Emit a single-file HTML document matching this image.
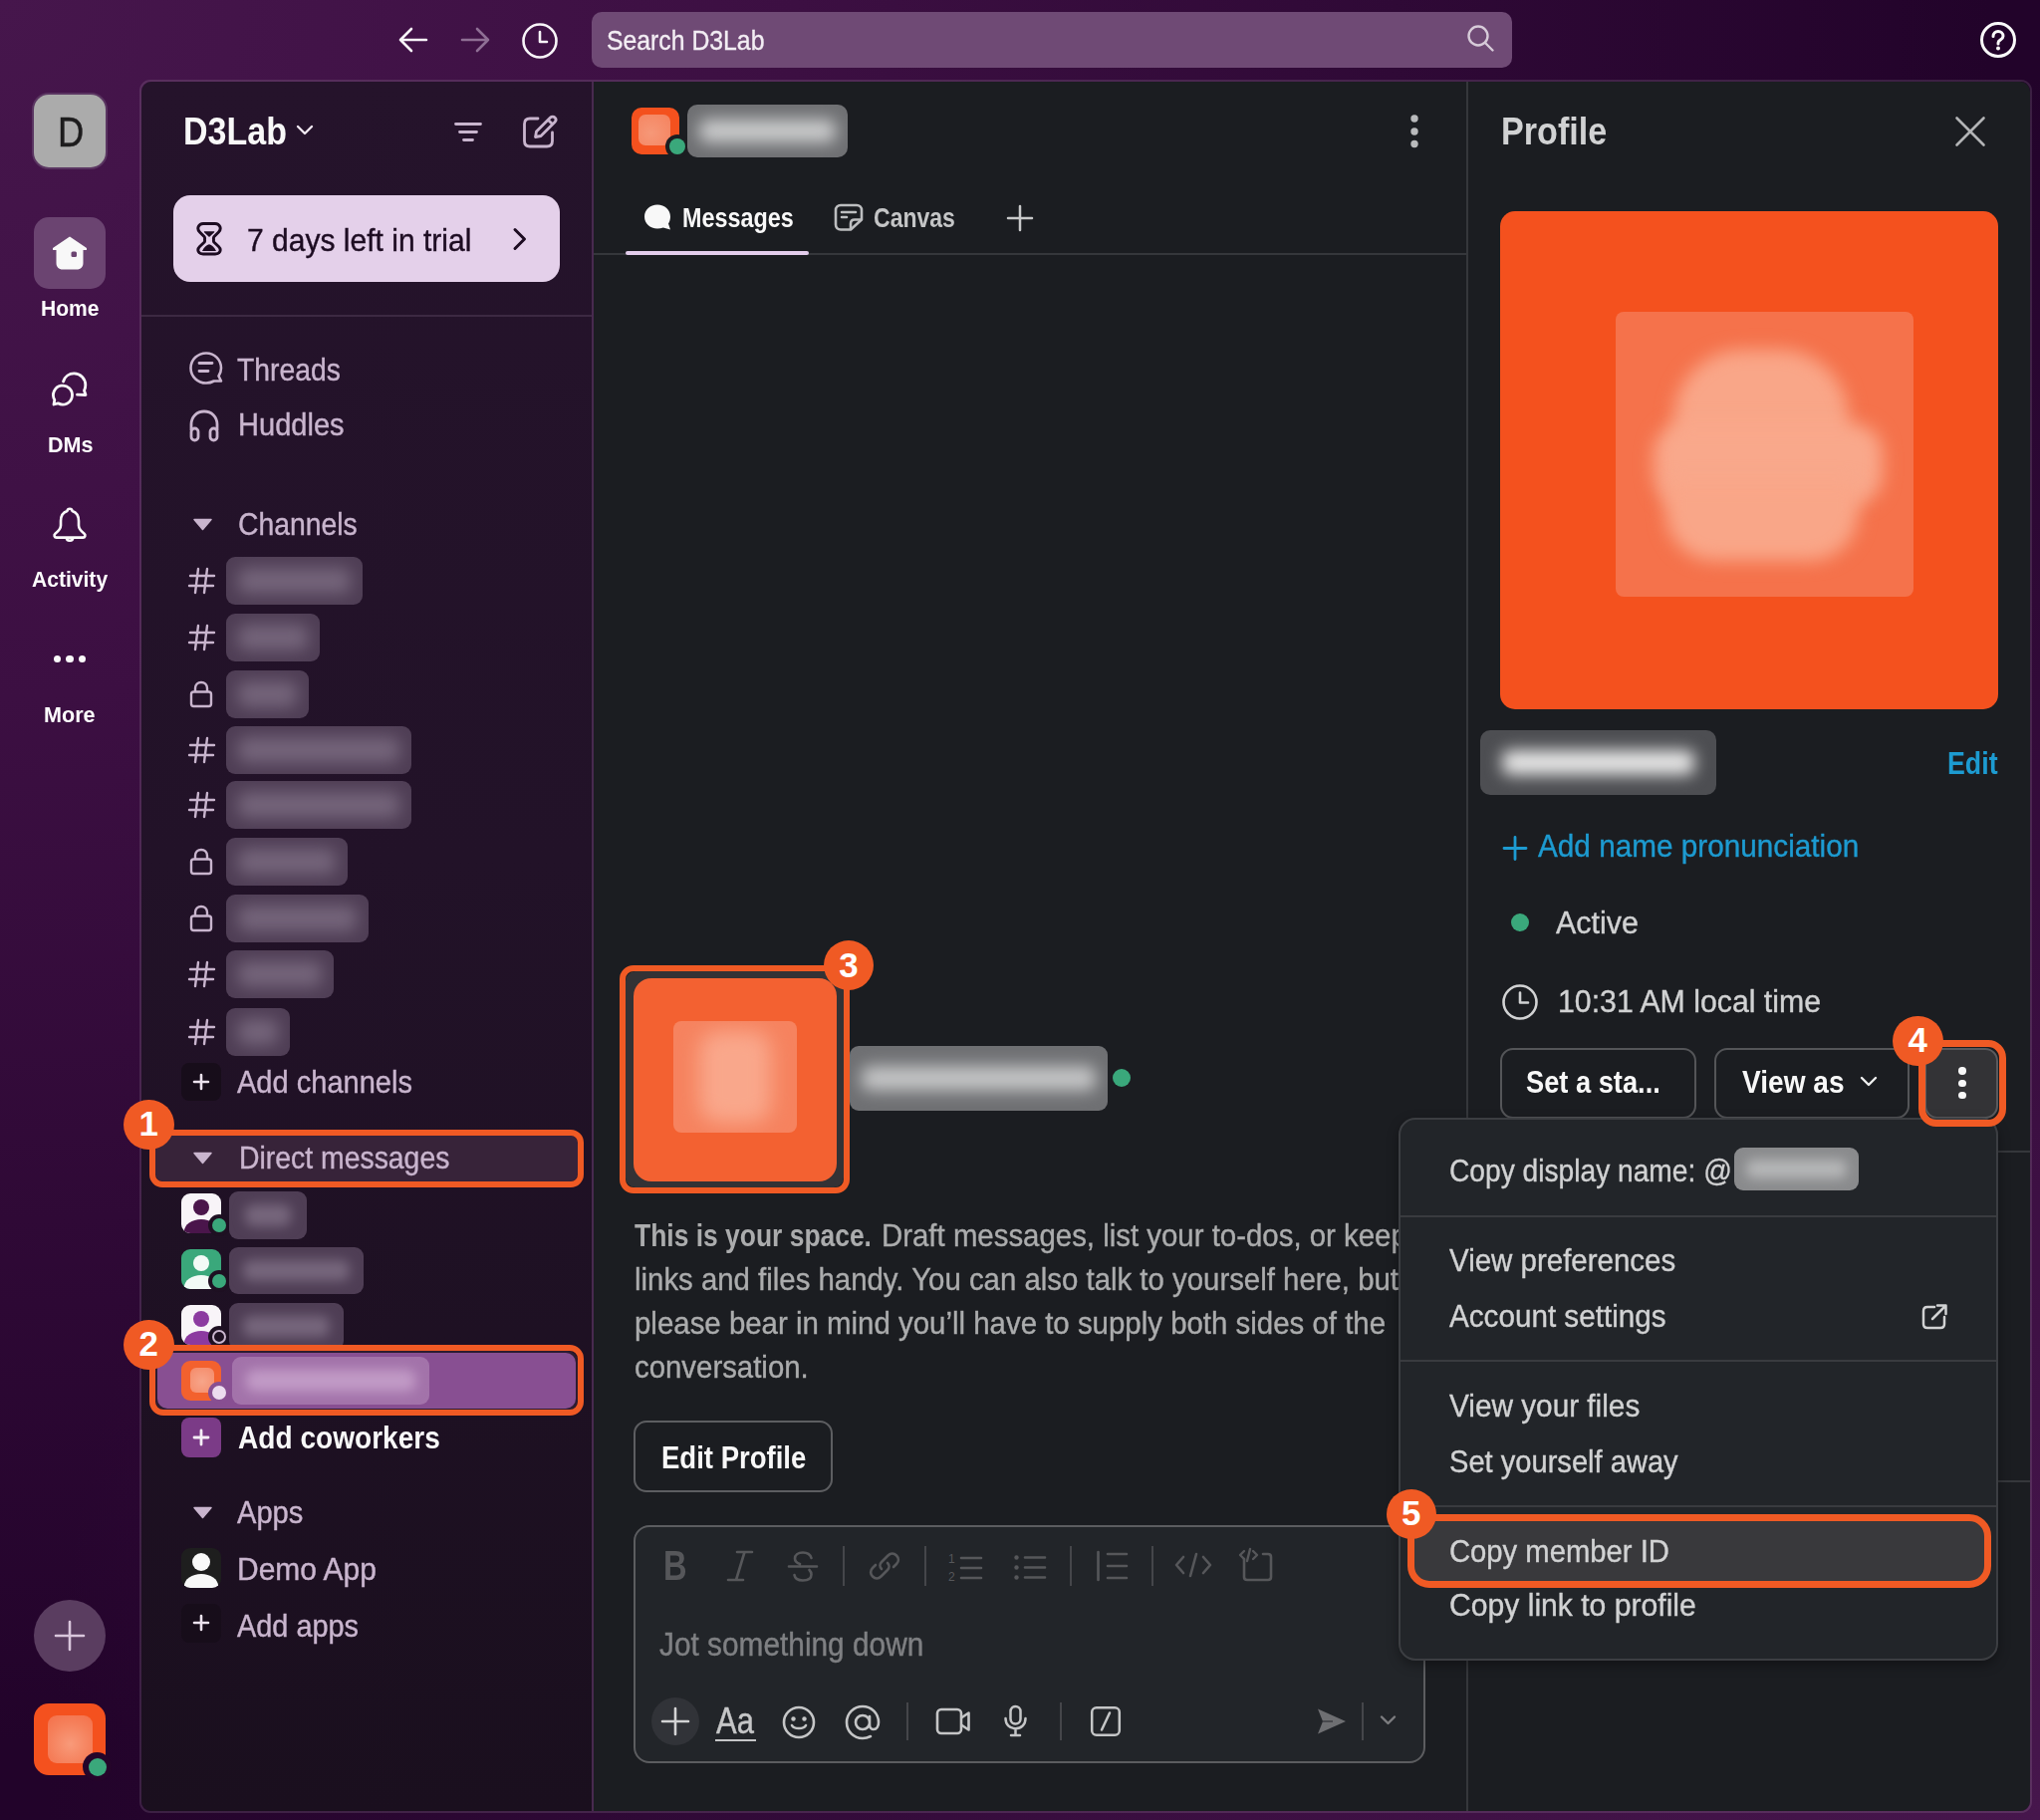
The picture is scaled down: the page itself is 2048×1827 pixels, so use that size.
<!DOCTYPE html><html><head><meta charset="utf-8"><style>html,body{margin:0;padding:0;width:2048px;height:1827px;overflow:hidden;background:#2c0631;}.t{position:absolute;white-space:nowrap;font-family:"Liberation Sans",sans-serif;transform-origin:0 0;}svg{overflow:visible}</style></head><body><div style="position:absolute;left:0;top:0;width:2048px;height:1827px;background:radial-gradient(ellipse 2000px 1750px at 0px 0px,#46164c 0%,#3c0f42 40%,rgba(34,3,42,0) 100%),radial-gradient(ellipse 2000px 1750px at 2048px 1827px,#46164c 0%,#3c0f42 40%,rgba(34,3,42,0) 100%),#22032a"></div>
<svg style="position:absolute;left:398.0px;top:26.0px;" width="32" height="28" viewBox="0 0 32 28" fill="none"><path d="M4 14 H30 M15 3 L4 14 L15 25" stroke="#f8f4f9" stroke-width="2.6" stroke-linecap="round" stroke-linejoin="round"/></svg>
<svg style="position:absolute;left:462.0px;top:26.0px;" width="32" height="28" viewBox="0 0 32 28" fill="none"><path d="M2 14 H28 M17 3 L28 14 L17 25" stroke="#8f6f95" stroke-width="2.6" stroke-linecap="round" stroke-linejoin="round"/></svg>
<svg style="position:absolute;left:522.0px;top:22.0px;" width="40" height="38" viewBox="0 0 40 38" fill="none"><circle cx="20" cy="19" r="16.5" stroke="#f8f4f9" stroke-width="2.6"/><path d="M20 10 V20 H27" stroke="#f8f4f9" stroke-width="2.6" stroke-linecap="round" stroke-linejoin="round"/></svg>
<div style="position:absolute;left:594.0px;top:12.0px;width:924.0px;height:56.0px;background:#6f4a75;border-radius:10px;"></div>
<div class="t" style="left:609.00px;top:26.55px;font-size:28.05px;line-height:28.05px;color:#f3eef4; -webkit-text-stroke:0.34px #f3eef4;transform:scaleX(0.8835);">Search D3Lab</div>
<svg style="position:absolute;left:1472.0px;top:24.0px;" width="30" height="30" viewBox="0 0 30 30" fill="none"><circle cx="12" cy="12" r="9.5" stroke="#d7cbd9" stroke-width="2.4"/><path d="M19 19 L26.5 26.5" stroke="#d7cbd9" stroke-width="2.4" stroke-linecap="round"/></svg>
<svg style="position:absolute;left:1986.0px;top:20.0px;" width="40" height="40" viewBox="0 0 40 40" fill="none"><circle cx="20" cy="20" r="16.5" stroke="#fafafa" stroke-width="3"/><path d="M15 16.5 C15 13.5 17.3 11.5 20 11.5 C22.7 11.5 25 13.5 25 16.2 C25 19 22 19.8 20.5 21.5 C20 22.2 20 23 20 24" stroke="#fafafa" stroke-width="3" stroke-linecap="round"/><circle cx="20" cy="28.6" r="2" fill="#fafafa"/></svg>
<div style="position:absolute;left:34.0px;top:95.0px;width:72.0px;height:73.0px;background:#ababab;border-radius:15px;box-shadow:0 0 0 2px #5a3561;"></div>
<div class="t" style="left:57.70px;top:112.44px;font-size:42.01px;line-height:42.01px;color:#1d1c1d; -webkit-text-stroke:0.50px #1d1c1d;transform:scaleX(0.8630);">D</div>
<div style="position:absolute;left:34.0px;top:218.0px;width:72.0px;height:72.0px;background:#6b4471;border-radius:15px;"></div>
<svg style="position:absolute;left:50.0px;top:234.0px;" width="40" height="40" viewBox="0 0 40 40" fill="none"><path d="M20 3.5 L37 15 L37 17 L33.5 17 L33.5 30 C33.5 34 31 36.5 27 36.5 L13 36.5 C9 36.5 6.5 34 6.5 30 L6.5 17 L3 17 L3 15 Z" fill="#f8f8f8"/><rect x="21.5" y="18.5" width="5.5" height="5.5" rx="1.5" fill="#6b4471"/></svg>
<div class="t" style="left:41.00px;top:299.02px;font-size:21.95px;line-height:21.95px;color:#ffffff; font-weight:700;transform:scaleX(0.9604);">Home</div>
<svg style="position:absolute;left:51.0px;top:371.0px;" width="38" height="38" viewBox="0 0 38 38" fill="none"><path d="M12.5 12 C14 7 18.5 3.9 23.3 3.9 C29.6 3.9 34.8 9 34.8 15.4 C34.8 17.5 34.2 19.5 33.5 21 L35 25.5 L26.5 25.2" stroke="#fafafa" stroke-width="2.8" stroke-linecap="round" stroke-linejoin="round"/><path d="M3.8 30.4 A9.5 9.5 0 1 1 7.25 33.8 L3 35 Z" stroke="#fafafa" stroke-width="2.8" stroke-linejoin="round"/></svg>
<div class="t" style="left:47.70px;top:435.57px;font-size:21.66px;line-height:21.66px;color:#ffffff; font-weight:700;transform:scaleX(0.9957);">DMs</div>
<svg style="position:absolute;left:51.0px;top:507.0px;" width="38" height="38" viewBox="0 0 38 38" fill="none"><path d="M19 3.8 C20.4 3.8 21.3 4.7 21.5 5.9 C25.7 7.2 28 11.2 28 16 L28 20.5 C28 23.8 30.5 26.3 33.6 28.8 C35.2 30.2 34.4 32.6 32.3 32.6 L5.7 32.6 C3.6 32.6 2.8 30.2 4.4 28.8 C7.5 26.3 10 23.8 10 20.5 L10 16 C10 11.2 12.3 7.2 16.5 5.9 C16.7 4.7 17.6 3.8 19 3.8 Z" stroke="#fafafa" stroke-width="2.6" stroke-linejoin="round"/><path d="M15.8 32.6 C15.8 34.6 17.2 35.8 19 35.8 C20.8 35.8 22.2 34.6 22.2 32.6" stroke="#fafafa" stroke-width="2.6"/></svg>
<div class="t" style="left:31.90px;top:570.80px;font-size:22.09px;line-height:22.09px;color:#ffffff; font-weight:700;transform:scaleX(0.9541);">Activity</div>
<div style="position:absolute;left:53.6px;top:658.2px;width:7.2px;height:7.2px;background:#fafafa;border-radius:50%;"></div>
<div style="position:absolute;left:66.4px;top:658.2px;width:7.2px;height:7.2px;background:#fafafa;border-radius:50%;"></div>
<div style="position:absolute;left:79.2px;top:658.2px;width:7.2px;height:7.2px;background:#fafafa;border-radius:50%;"></div>
<div class="t" style="left:44.00px;top:706.93px;font-size:22.53px;line-height:22.53px;color:#ffffff; font-weight:700;transform:scaleX(0.9583);">More</div>
<div style="position:absolute;left:34.0px;top:1606.0px;width:72.0px;height:72.0px;background:#5a3d60;border-radius:50%;"></div>
<svg style="position:absolute;left:50.0px;top:1622.0px;" width="40" height="40" viewBox="0 0 40 40" fill="none"><path d="M20 6 V34 M6 20 H34" stroke="#d9c6dc" stroke-width="2.6" stroke-linecap="round"/></svg>
<div style="position:absolute;left:34.0px;top:1710.0px;width:72.0px;height:72.0px;background:#f4511e;border-radius:15px;"></div>
<div style="position:absolute;left:48px;top:1722px;width:45px;height:48px;border-radius:9px;background:radial-gradient(circle at 50% 60%,#f89a7a 0%,#f57f5a 60%,#f4704a 100%);"></div>
<div style="position:absolute;left:83.0px;top:1759.0px;width:29.0px;height:29.0px;background:#25052a;border-radius:50%;"></div>
<div style="position:absolute;left:88.5px;top:1764.5px;width:18.0px;height:18.0px;background:#3aa87b;border-radius:50%;"></div>
<div style="position:absolute;left:140px;top:80px;width:1900px;height:1740px;border-radius:11px;border:2px solid rgba(255,255,255,0.115);box-sizing:border-box;"></div>
<div style="position:absolute;left:142px;top:82px;width:452px;height:1736px;border-radius:10px 0 0 10px;background:linear-gradient(180deg,#25132b 0%,#221228 45%,#1a0f1e 100%);"></div>
<div class="t" style="left:183.70px;top:113.59px;font-size:37.94px;line-height:37.94px;color:#f8f8f8; font-weight:700;transform:scaleX(0.8965);">D3Lab</div>
<svg style="position:absolute;left:296.0px;top:124.0px;" width="20" height="14" viewBox="0 0 20 14" fill="none"><path d="M3 3 L10 10 L17 3" stroke="#f0e8f1" stroke-width="2.4" stroke-linecap="round" stroke-linejoin="round"/></svg>
<svg style="position:absolute;left:454.0px;top:121.0px;" width="32" height="24" viewBox="0 0 32 24" fill="none"><path d="M3.5 3.5 H28.5 M7.5 11.5 H24.5 M11.5 19.5 H20.5" stroke="#c9b5ce" stroke-width="2.8" stroke-linecap="round"/></svg>
<svg style="position:absolute;left:522.0px;top:113.0px;" width="40" height="38" viewBox="0 0 40 38" fill="none"><path d="M18 6 H10 C6.5 6 4.5 8 4.5 11.5 L4.5 28.5 C4.5 32 6.5 34 10 34 L27 34 C30.5 34 32.5 32 32.5 28.5 L32.5 20" stroke="#c9b5ce" stroke-width="2.8" stroke-linecap="round"/><path d="M15.5 24.5 L16.5 19 L30.5 5 C31.8 3.7 33.8 3.7 35 5 C36.3 6.3 36.3 8.2 35 9.5 L21 23.5 Z M28.2 7.3 L32.7 11.8" stroke="#c9b5ce" stroke-width="2.8" stroke-linejoin="round"/></svg>
<div style="position:absolute;left:174.0px;top:196.0px;width:387.5px;height:87.0px;background:#e4d0ea;border-radius:17px;"></div>
<svg style="position:absolute;left:195.0px;top:221.0px;" width="30" height="38" viewBox="0 0 30 38" fill="none"><path d="M9 3.5 H21 C25.5 3.5 28 8.5 24.5 12 L20 16.5 C19 17.5 19.5 18.5 19.5 19.4 C19.5 20.3 19 21.3 20 22.3 L24.5 26.5 C28 30 25.5 34 21 34 H9 C4.5 34 2 30 5.5 26.5 L10 22.3 C11 21.3 10.5 20.3 10.5 19.4 C10.5 18.5 11 17.5 10 16.5 L5.5 12 C2 8.5 4.5 3.5 9 3.5 Z" stroke="#1d0c22" stroke-width="2.9" stroke-linejoin="round"/><path d="M10.5 11.3 H19.8 C20.3 11.3 20.5 11.8 20.1 12.2 L15.6 16.6 C15.3 16.9 14.8 16.9 14.5 16.6 L10 12.2 C9.6 11.8 9.9 11.3 10.5 11.3 Z" fill="#1d0c22"/><path d="M8 31 C9.5 27.5 12.5 25 15 24.3 C17.5 25 20.5 27.5 22 31 Z" fill="#1d0c22"/></svg>
<div class="t" style="left:247.50px;top:224.93px;font-size:31.98px;line-height:31.98px;color:#1d0c22; -webkit-text-stroke:0.38px #1d0c22;transform:scaleX(0.9396);">7 days left in trial</div>
<svg style="position:absolute;left:512.0px;top:227.0px;" width="20" height="26" viewBox="0 0 20 26" fill="none"><path d="M5 3.5 L14.5 13 L5 22.5" stroke="#1d0c22" stroke-width="3" stroke-linecap="round" stroke-linejoin="round"/></svg>
<div style="position:absolute;left:142.0px;top:316.0px;width:452.0px;height:2.0px;background:#3c2942;"></div>
<svg style="position:absolute;left:188.0px;top:351.0px;" width="38" height="38" viewBox="0 0 38 38" fill="none"><path d="M34 31.5 L31.5 26.5 C33 24 34 21.5 34 18.5 C34 10 27.5 3.5 19 3.5 C10.5 3.5 3.5 10 3.5 18.5 C3.5 27 10.5 33.5 19 33.5 C22 33.5 24.5 32.8 26.8 31.5 Z" stroke="#c9b5ce" stroke-width="2.6" stroke-linejoin="round"/><path d="M12 13.5 H25 M12 21.5 H21" stroke="#c9b5ce" stroke-width="2.8" stroke-linecap="round"/></svg>
<div class="t" style="left:238.00px;top:355.01px;font-size:32.12px;line-height:32.12px;color:#c9b5ce; -webkit-text-stroke:0.39px #c9b5ce;transform:scaleX(0.8822);">Threads</div>
<svg style="position:absolute;left:188.0px;top:410.0px;" width="34" height="34" viewBox="0 0 34 34" fill="none"><path d="M4 22 V16 C4 8.5 9.5 3 17 3 C24.5 3 30 8.5 30 16 V22" stroke="#c9b5ce" stroke-width="2.8"/><rect x="4" y="20" width="7" height="12" rx="3.5" stroke="#c9b5ce" stroke-width="2.8"/><rect x="23" y="20" width="7" height="12" rx="3.5" stroke="#c9b5ce" stroke-width="2.8"/></svg>
<div class="t" style="left:239.00px;top:411.48px;font-size:31.69px;line-height:31.69px;color:#c9b5ce; -webkit-text-stroke:0.38px #c9b5ce;transform:scaleX(0.9167);">Huddles</div>
<svg style="position:absolute;left:192.0px;top:518.0px;" width="24" height="16" viewBox="0 0 24 16" fill="none"><path d="M3 3.5 H20 L11.5 13.5 Z" fill="#c9b5ce" stroke="#c9b5ce" stroke-width="1.5" stroke-linejoin="round"/></svg>
<div class="t" style="left:238.80px;top:511.25px;font-size:31.83px;line-height:31.83px;color:#c9b5ce; -webkit-text-stroke:0.38px #c9b5ce;transform:scaleX(0.8893);">Channels</div>
<svg style="position:absolute;left:188.0px;top:568.9px;" width="30" height="28" viewBox="0 0 30 28" fill="none"><path d="M11 2 L8 26 M20 2 L17 26 M3 9 H27 M2 19 H26" stroke="#c9b5ce" stroke-width="2.4" stroke-linecap="round"/></svg>
<div style="position:absolute;left:227.0px;top:558.9px;width:137.0px;height:48.0px;background:#4f3e55;border-radius:9px;overflow:hidden;"><div style="position:absolute;left:12px;right:12px;top:11px;bottom:11px;background:#74647a;filter:blur(8px);border-radius:8px"></div></div>
<svg style="position:absolute;left:188.0px;top:626.0px;" width="30" height="28" viewBox="0 0 30 28" fill="none"><path d="M11 2 L8 26 M20 2 L17 26 M3 9 H27 M2 19 H26" stroke="#c9b5ce" stroke-width="2.4" stroke-linecap="round"/></svg>
<div style="position:absolute;left:227.0px;top:616.0px;width:94.0px;height:48.0px;background:#4f3e55;border-radius:9px;overflow:hidden;"><div style="position:absolute;left:12px;right:12px;top:11px;bottom:11px;background:#74647a;filter:blur(8px);border-radius:8px"></div></div>
<svg style="position:absolute;left:189.0px;top:682.0px;" width="26" height="30" viewBox="0 0 26 30" fill="none"><path d="M7 12.5 V9 C7 5.5 9.5 3 13 3 C16.5 3 19 5.5 19 9 V12.5" stroke="#c9b5ce" stroke-width="2.4"/><rect x="3" y="12.5" width="20" height="14.5" rx="2.5" stroke="#c9b5ce" stroke-width="2.4"/></svg>
<div style="position:absolute;left:227.0px;top:673.0px;width:83.0px;height:48.0px;background:#4f3e55;border-radius:9px;overflow:hidden;"><div style="position:absolute;left:12px;right:12px;top:11px;bottom:11px;background:#74647a;filter:blur(8px);border-radius:8px"></div></div>
<svg style="position:absolute;left:188.0px;top:738.5px;" width="30" height="28" viewBox="0 0 30 28" fill="none"><path d="M11 2 L8 26 M20 2 L17 26 M3 9 H27 M2 19 H26" stroke="#c9b5ce" stroke-width="2.4" stroke-linecap="round"/></svg>
<div style="position:absolute;left:227.0px;top:728.5px;width:185.6px;height:48.0px;background:#4f3e55;border-radius:9px;overflow:hidden;"><div style="position:absolute;left:12px;right:12px;top:11px;bottom:11px;background:#74647a;filter:blur(8px);border-radius:8px"></div></div>
<svg style="position:absolute;left:188.0px;top:794.0px;" width="30" height="28" viewBox="0 0 30 28" fill="none"><path d="M11 2 L8 26 M20 2 L17 26 M3 9 H27 M2 19 H26" stroke="#c9b5ce" stroke-width="2.4" stroke-linecap="round"/></svg>
<div style="position:absolute;left:227.0px;top:784.0px;width:185.6px;height:48.0px;background:#4f3e55;border-radius:9px;overflow:hidden;"><div style="position:absolute;left:12px;right:12px;top:11px;bottom:11px;background:#74647a;filter:blur(8px);border-radius:8px"></div></div>
<svg style="position:absolute;left:189.0px;top:850.0px;" width="26" height="30" viewBox="0 0 26 30" fill="none"><path d="M7 12.5 V9 C7 5.5 9.5 3 13 3 C16.5 3 19 5.5 19 9 V12.5" stroke="#c9b5ce" stroke-width="2.4"/><rect x="3" y="12.5" width="20" height="14.5" rx="2.5" stroke="#c9b5ce" stroke-width="2.4"/></svg>
<div style="position:absolute;left:227.0px;top:841.0px;width:122.0px;height:48.0px;background:#4f3e55;border-radius:9px;overflow:hidden;"><div style="position:absolute;left:12px;right:12px;top:11px;bottom:11px;background:#74647a;filter:blur(8px);border-radius:8px"></div></div>
<svg style="position:absolute;left:189.0px;top:907.0px;" width="26" height="30" viewBox="0 0 26 30" fill="none"><path d="M7 12.5 V9 C7 5.5 9.5 3 13 3 C16.5 3 19 5.5 19 9 V12.5" stroke="#c9b5ce" stroke-width="2.4"/><rect x="3" y="12.5" width="20" height="14.5" rx="2.5" stroke="#c9b5ce" stroke-width="2.4"/></svg>
<div style="position:absolute;left:227.0px;top:898.0px;width:142.7px;height:48.0px;background:#4f3e55;border-radius:9px;overflow:hidden;"><div style="position:absolute;left:12px;right:12px;top:11px;bottom:11px;background:#74647a;filter:blur(8px);border-radius:8px"></div></div>
<svg style="position:absolute;left:188.0px;top:964.0px;" width="30" height="28" viewBox="0 0 30 28" fill="none"><path d="M11 2 L8 26 M20 2 L17 26 M3 9 H27 M2 19 H26" stroke="#c9b5ce" stroke-width="2.4" stroke-linecap="round"/></svg>
<div style="position:absolute;left:227.0px;top:954.0px;width:107.7px;height:48.0px;background:#4f3e55;border-radius:9px;overflow:hidden;"><div style="position:absolute;left:12px;right:12px;top:11px;bottom:11px;background:#74647a;filter:blur(8px);border-radius:8px"></div></div>
<svg style="position:absolute;left:188.0px;top:1021.5px;" width="30" height="28" viewBox="0 0 30 28" fill="none"><path d="M11 2 L8 26 M20 2 L17 26 M3 9 H27 M2 19 H26" stroke="#c9b5ce" stroke-width="2.4" stroke-linecap="round"/></svg>
<div style="position:absolute;left:227.0px;top:1011.5px;width:63.6px;height:48.0px;background:#4f3e55;border-radius:9px;overflow:hidden;"><div style="position:absolute;left:12px;right:12px;top:11px;bottom:11px;background:#74647a;filter:blur(8px);border-radius:8px"></div></div>
<div style="position:absolute;left:182.0px;top:1066.5px;width:40.0px;height:38.5px;background:#170d1a;border-radius:8px;"></div>
<svg style="position:absolute;left:190.0px;top:1074.0px;" width="24" height="24" viewBox="0 0 24 24" fill="none"><path d="M12 5 V19 M5 12 H19" stroke="#ece2ee" stroke-width="2.6" stroke-linecap="round"/></svg>
<div class="t" style="left:238.00px;top:1069.93px;font-size:31.98px;line-height:31.98px;color:#c9b5ce; -webkit-text-stroke:0.38px #c9b5ce;transform:scaleX(0.9082);">Add channels</div>
<div style="position:absolute;left:156.0px;top:1140.0px;width:424.0px;height:46.0px;background:#372339;border-radius:8px;"></div>
<svg style="position:absolute;left:192.0px;top:1154.0px;" width="24" height="16" viewBox="0 0 24 16" fill="none"><path d="M3 3.5 H20 L11.5 13.5 Z" fill="#c9b5ce" stroke="#c9b5ce" stroke-width="1.5" stroke-linejoin="round"/></svg>
<div class="t" style="left:239.70px;top:1146.67px;font-size:31.11px;line-height:31.11px;color:#c9b5ce; -webkit-text-stroke:0.37px #c9b5ce;transform:scaleX(0.9124);">Direct messages</div>
<div style="position:absolute;left:182.0px;top:1198.0px;width:40.0px;height:40.0px;background:#f8f4f8;border-radius:9px;overflow:hidden;"></div>
<div style="position:absolute;left:182px;top:1198px;width:40px;height:40px;border-radius:9px;overflow:hidden;"><div style="position:absolute;left:12px;top:6px;width:16px;height:16px;border-radius:50%;background:#4a154b"></div><div style="position:absolute;left:3px;top:26px;width:34px;height:24px;border-radius:50% 50% 0 0;background:#4a154b"></div></div>
<div style="position:absolute;left:209.0px;top:1219.0px;width:22.0px;height:22.0px;background:#1e1022;border-radius:50%;"></div>
<div style="position:absolute;left:213.0px;top:1223.0px;width:14.0px;height:14.0px;background:#3aa87b;border-radius:50%;"></div>
<div style="position:absolute;left:230.0px;top:1196.0px;width:77.5px;height:47.6px;background:#4f3e55;border-radius:9px;overflow:hidden;"><div style="position:absolute;left:16px;right:16px;top:13px;bottom:13px;background:#76667c;filter:blur(6px);border-radius:8px"></div></div>
<div style="position:absolute;left:182.0px;top:1254.0px;width:40.0px;height:40.0px;background:#3aa87b;border-radius:9px;overflow:hidden;"></div>
<div style="position:absolute;left:182px;top:1254px;width:40px;height:40px;border-radius:9px;overflow:hidden;"><div style="position:absolute;left:12px;top:6px;width:16px;height:16px;border-radius:50%;background:#f2faf6"></div><div style="position:absolute;left:3px;top:26px;width:34px;height:24px;border-radius:50% 50% 0 0;background:#f2faf6"></div></div>
<div style="position:absolute;left:209.0px;top:1275.0px;width:22.0px;height:22.0px;background:#1e1022;border-radius:50%;"></div>
<div style="position:absolute;left:213.0px;top:1279.0px;width:14.0px;height:14.0px;background:#3aa87b;border-radius:50%;"></div>
<div style="position:absolute;left:230.0px;top:1252.0px;width:134.6px;height:47.4px;background:#4f3e55;border-radius:9px;overflow:hidden;"><div style="position:absolute;left:14px;right:14px;top:13px;bottom:13px;background:#76667c;filter:blur(6px);border-radius:8px"></div></div>
<div style="position:absolute;left:182.0px;top:1310.0px;width:40.0px;height:40.0px;background:#f8f4f8;border-radius:9px;overflow:hidden;"></div>
<div style="position:absolute;left:182px;top:1310px;width:40px;height:40px;border-radius:9px;overflow:hidden;"><div style="position:absolute;left:12px;top:6px;width:16px;height:16px;border-radius:50%;background:#8c3aa0"></div><div style="position:absolute;left:3px;top:26px;width:34px;height:24px;border-radius:50% 50% 0 0;background:#8c3aa0"></div></div>
<div style="position:absolute;left:209.0px;top:1331.0px;width:22.0px;height:22.0px;background:#1e1022;border-radius:50%;"></div>
<div style="position:absolute;left:213.0px;top:1335.0px;width:14.0px;height:14.0px;border:2.4px solid #c9b5ce;box-sizing:border-box;border-radius:50%;"></div>
<div style="position:absolute;left:230.0px;top:1308.0px;width:114.7px;height:47.4px;background:#4f3e55;border-radius:9px;overflow:hidden;"><div style="position:absolute;left:14px;right:14px;top:13px;bottom:13px;background:#76667c;filter:blur(6px);border-radius:8px"></div></div>
<div style="position:absolute;left:156.0px;top:1356.0px;width:424.0px;height:60.0px;background:#2d1c31;border-radius:10px;"></div>
<div style="position:absolute;left:158.0px;top:1358.0px;width:420.0px;height:55.5px;background:#884f92;border-radius:10px;"></div>
<div style="position:absolute;left:182.0px;top:1366.0px;width:40.0px;height:40.0px;background:#f3612e;border-radius:9px;"></div>
<div style="position:absolute;left:191px;top:1373px;width:24px;height:25px;border-radius:6px;background:radial-gradient(circle at 50% 55%,#f7a58a 0%,#f58a68 100%);"></div>
<div style="position:absolute;left:209.0px;top:1387.0px;width:22.0px;height:22.0px;background:#884f92;border-radius:50%;"></div>
<div style="position:absolute;left:213.0px;top:1391.0px;width:14.0px;height:14.0px;background:#ecdcef;border-radius:50%;"></div>
<div style="position:absolute;left:233.0px;top:1362.3px;width:197.7px;height:47.7px;background:#a373aa;border-radius:9px;overflow:hidden;"><div style="position:absolute;left:14px;right:14px;top:13px;bottom:13px;background:#c19ac6;filter:blur(6px);border-radius:8px"></div></div>
<div style="position:absolute;left:182.0px;top:1423.0px;width:40.0px;height:40.0px;background:#7b3b87;border-radius:8px;"></div>
<svg style="position:absolute;left:190.0px;top:1431.0px;" width="24" height="24" viewBox="0 0 24 24" fill="none"><path d="M12 5 V19 M5 12 H19" stroke="#f5eef6" stroke-width="2.8" stroke-linecap="round"/></svg>
<div class="t" style="left:238.50px;top:1427.64px;font-size:30.67px;line-height:30.67px;color:#f8f8f8; font-weight:700;transform:scaleX(0.9161);">Add coworkers</div>
<svg style="position:absolute;left:192.0px;top:1510.0px;" width="24" height="16" viewBox="0 0 24 16" fill="none"><path d="M3 3.5 H20 L11.5 13.5 Z" fill="#c9b5ce" stroke="#c9b5ce" stroke-width="1.5" stroke-linejoin="round"/></svg>
<div class="t" style="left:238.00px;top:1503.92px;font-size:30.81px;line-height:30.81px;color:#c9b5ce; -webkit-text-stroke:0.37px #c9b5ce;transform:scaleX(0.9451);">Apps</div>
<div style="position:absolute;left:182.0px;top:1554.0px;width:40.0px;height:40.0px;background:#1e1e1e;border-radius:9px;overflow:hidden;"></div>
<div style="position:absolute;left:182px;top:1554px;width:40px;height:40px;border-radius:9px;overflow:hidden;"><div style="position:absolute;left:11px;top:5px;width:18px;height:18px;border-radius:50%;background:#f8f8f8"></div><div style="position:absolute;left:3px;top:26px;width:34px;height:24px;border-radius:50% 50% 0 0;background:#f8f8f8"></div></div>
<div class="t" style="left:238.00px;top:1558.71px;font-size:32.12px;line-height:32.12px;color:#c9b5ce; -webkit-text-stroke:0.39px #c9b5ce;transform:scaleX(0.9333);">Demo App</div>
<div style="position:absolute;left:182.0px;top:1610.0px;width:40.0px;height:39.0px;background:#170d1a;border-radius:8px;"></div>
<svg style="position:absolute;left:190.0px;top:1617.0px;" width="24" height="24" viewBox="0 0 24 24" fill="none"><path d="M12 5 V19 M5 12 H19" stroke="#ece2ee" stroke-width="2.6" stroke-linecap="round"/></svg>
<div class="t" style="left:238.00px;top:1615.53px;font-size:31.98px;line-height:31.98px;color:#c9b5ce; -webkit-text-stroke:0.38px #c9b5ce;transform:scaleX(0.9030);">Add apps</div>
<div style="position:absolute;left:594px;top:82px;width:1444px;height:1736px;border-radius:0 10px 10px 0;background:#1b1d21;"></div>
<div style="position:absolute;left:593.5px;top:82.0px;width:2.0px;height:1736.0px;background:#482a4f;"></div>
<div style="position:absolute;left:634.0px;top:107.7px;width:48.0px;height:47.3px;background:#f4511e;border-radius:10px;"></div>
<div style="position:absolute;left:641px;top:114.6px;width:32px;height:31px;border-radius:7px;background:radial-gradient(circle at 40% 60%,#f69878 0%,#f5825e 100%);"></div>
<div style="position:absolute;left:668.0px;top:135.0px;width:24.0px;height:24.0px;background:#1b1d21;border-radius:50%;"></div>
<div style="position:absolute;left:672.0px;top:138.5px;width:16.0px;height:16.0px;background:#3aa87b;border-radius:50%;"></div>
<div style="position:absolute;left:690.0px;top:105.0px;width:161.0px;height:53.0px;background:#6f7073;border-radius:10px;overflow:hidden;"><div style="position:absolute;left:12px;right:12px;top:15px;bottom:15px;background:#cacbcc;filter:blur(8px);border-radius:8px"></div></div>
<svg style="position:absolute;left:1414.0px;top:113.0px;" width="12" height="38" viewBox="0 0 12 38" fill="none"><circle cx="6" cy="6" r="3.7" fill="#b9babc"/><circle cx="6" cy="19" r="3.7" fill="#b9babc"/><circle cx="6" cy="31.5" r="3.7" fill="#b9babc"/></svg>
<svg style="position:absolute;left:644.0px;top:202.0px;" width="34" height="32" viewBox="0 0 34 32" fill="none"><path d="M16 3.5 C8.5 3.5 3 8.8 3 15.5 C3 22.2 8.5 27.5 16 27.5 C18 27.5 20 27 21.8 26.4 L29 28.5 L27 22.5 C28.3 20.5 29 18 29 15.5 C29 8.8 23.5 3.5 16 3.5 Z" fill="#f8f8f8"/></svg>
<div class="t" style="left:684.90px;top:204.55px;font-size:28.05px;line-height:28.05px;color:#f8f8f8; font-weight:700;transform:scaleX(0.8330);">Messages</div>
<svg style="position:absolute;left:836.0px;top:203.0px;" width="32" height="30" viewBox="0 0 32 30" fill="none"><path d="M18 27.5 H8 C5 27.5 3 25.5 3 22.5 V8 C3 5 5 3 8 3 H24 C27 3 29 5 29 8 V17.5 Z" stroke="#bdbec0" stroke-width="2.6" stroke-linejoin="round"/><path d="M18 27.5 V21.5 C18 19 19.5 17.5 22 17.5 H29" stroke="#bdbec0" stroke-width="2.6" stroke-linejoin="round"/><path d="M9 10 H23 M9 15 H14" stroke="#bdbec0" stroke-width="2.6" stroke-linecap="round"/></svg>
<div class="t" style="left:877.40px;top:204.55px;font-size:28.05px;line-height:28.05px;color:#c4c5c6; font-weight:700;transform:scaleX(0.8211);">Canvas</div>
<svg style="position:absolute;left:1010.0px;top:205.0px;" width="28" height="28" viewBox="0 0 28 28" fill="none"><path d="M14 2 V26 M2 14 H26" stroke="#c8c9ca" stroke-width="2.5" stroke-linecap="round"/></svg>
<div style="position:absolute;left:595.5px;top:253.8px;width:876.5px;height:2.0px;background:#35373b;"></div>
<div style="position:absolute;left:628.0px;top:251.8px;width:184.0px;height:4.0px;background:#e3cdec;border-radius:2px;"></div>
<div style="position:absolute;left:1472.0px;top:82.0px;width:2.0px;height:1736.0px;background:#35373b;"></div>
<div style="position:absolute;left:627.8px;top:974.5px;width:219.2px;height:217.0px;background:#333235;border-radius:10px;"></div>
<div style="position:absolute;left:636.0px;top:981.8px;width:204.3px;height:203.8px;background:#f36131;border-radius:18px;"></div>
<div style="position:absolute;left:676px;top:1025px;width:124px;height:111.6px;border-radius:8px;background:#f6835f;overflow:hidden;"><div style="position:absolute;left:26px;top:10px;width:72px;height:92px;background:#f9a78b;filter:blur(10px);border-radius:20px"></div></div>
<div style="position:absolute;left:853.0px;top:1050.0px;width:258.6px;height:65.4px;background:#6f7073;border-radius:9px;overflow:hidden;"><div style="position:absolute;left:12px;right:12px;top:20px;bottom:20px;background:#c3c4c5;filter:blur(8px);border-radius:8px"></div></div>
<div style="position:absolute;left:1116.7px;top:1072.5px;width:18.6px;height:18.6px;background:#3aa87b;border-radius:50%;"></div>
<div class="t" style="left:637.00px;top:1225.08px;font-size:31.69px;line-height:31.69px;color:#abacad; font-weight:700;transform:scaleX(0.8341);">This is your space.</div>
<div class="t" style="left:884.60px;top:1225.08px;font-size:31.69px;line-height:31.69px;color:#abacad; -webkit-text-stroke:0.38px #abacad;transform:scaleX(0.9278);">Draft messages, list your to-dos, or keep</div>
<div class="t" style="left:637.00px;top:1269.18px;font-size:31.69px;line-height:31.69px;color:#abacad; -webkit-text-stroke:0.38px #abacad;transform:scaleX(0.9271);">links and files handy. You can also talk to yourself here, but</div>
<div class="t" style="left:637.00px;top:1312.68px;font-size:31.69px;line-height:31.69px;color:#abacad; -webkit-text-stroke:0.38px #abacad;transform:scaleX(0.9286);">please bear in mind you’ll have to supply both sides of the</div>
<div class="t" style="left:637.00px;top:1356.78px;font-size:31.69px;line-height:31.69px;color:#abacad; -webkit-text-stroke:0.38px #abacad;transform:scaleX(0.9271);">conversation.</div>
<div style="position:absolute;left:636.2px;top:1426.0px;width:199.5px;height:71.5px;border:2px solid #5d5e61;border-radius:13px;box-sizing:border-box;"></div>
<div class="t" style="left:663.60px;top:1446.93px;font-size:31.98px;line-height:31.98px;color:#f8f8f8; font-weight:700;transform:scaleX(0.8612);">Edit Profile</div>
<div style="position:absolute;left:636.0px;top:1530.5px;width:795.0px;height:239.5px;background:#222529;border:2px solid #5c5d60;border-radius:16px;box-sizing:border-box;"></div>
<div class="t" style="left:666.30px;top:1550.82px;font-size:42.15px;line-height:42.15px;color:#56575a; font-weight:700;transform:scaleX(0.7743);">B</div>
<svg style="position:absolute;left:728.0px;top:1555.0px;" width="30" height="34" viewBox="0 0 30 34" fill="none"><path d="M12 3 H27 M3 31 H18 M19.5 3 L11 31" stroke="#56575a" stroke-width="2.6" stroke-linecap="round"/></svg>
<svg style="position:absolute;left:789.0px;top:1555.0px;" width="34" height="34" viewBox="0 0 34 34" fill="none"><path d="M25.5 9 C24.5 5.5 21.5 3.5 17 3.5 C12 3.5 9 6 9 9.5 C9 12.5 11 14 14 15 M3 17.5 H31 M23.5 21 C25 22.5 25.5 24 25.5 25.5 C25.5 29.5 22 31.5 17 31.5 C12 31.5 9 29.5 8.5 26" stroke="#56575a" stroke-width="2.6" stroke-linecap="round"/></svg>
<div style="position:absolute;left:845.7px;top:1552.0px;width:2.3px;height:40.0px;background:#45464a;"></div>
<svg style="position:absolute;left:870.0px;top:1554.0px;" width="36" height="36" viewBox="0 0 36 36" fill="none"><path d="M15 21 C13 19 13 16 15 14 L21.5 7.5 C24 5 27.5 5 30 7.5 C32.5 10 32.5 13.5 30 16 L27 19 M21 15 C23 17 23 20 21 22 L14.5 28.5 C12 31 8.5 31 6 28.5 C3.5 26 3.5 22.5 6 20 L9 17" stroke="#56575a" stroke-width="2.6" stroke-linecap="round"/></svg>
<div style="position:absolute;left:927.7px;top:1552.0px;width:2.3px;height:40.0px;background:#45464a;"></div>
<svg style="position:absolute;left:951.0px;top:1556.0px;" width="38" height="34" viewBox="0 0 38 34" fill="none"><text x="1" y="13" font-family="Liberation Sans" font-size="12" fill="#56575a">1</text><text x="1" y="31" font-family="Liberation Sans" font-size="12" fill="#56575a">2</text><path d="M14 8 H34 M14 18 H34 M14 28 H34" stroke="#56575a" stroke-width="2.6" stroke-linecap="round"/></svg>
<svg style="position:absolute;left:1016.0px;top:1556.0px;" width="38" height="34" viewBox="0 0 38 34" fill="none"><circle cx="4.5" cy="7.5" r="2.2" fill="#56575a"/><circle cx="4.5" cy="17.5" r="2.2" fill="#56575a"/><circle cx="4.5" cy="27.5" r="2.2" fill="#56575a"/><path d="M13 7.5 H33 M13 17.5 H33 M13 27.5 H33" stroke="#56575a" stroke-width="2.6" stroke-linecap="round"/></svg>
<div style="position:absolute;left:1073.7px;top:1552.0px;width:2.3px;height:40.0px;background:#45464a;"></div>
<svg style="position:absolute;left:1099.0px;top:1555.0px;" width="36" height="34" viewBox="0 0 36 34" fill="none"><path d="M3.5 3 V31 M13 5 H32 M13 17 H32 M13 29 H32" stroke="#56575a" stroke-width="2.6" stroke-linecap="round"/></svg>
<div style="position:absolute;left:1155.7px;top:1552.0px;width:2.3px;height:40.0px;background:#45464a;"></div>
<svg style="position:absolute;left:1178.0px;top:1556.0px;" width="40" height="30" viewBox="0 0 40 30" fill="none"><path d="M10 7 L3 15 L10 23 M30 7 L37 15 L30 23 M23 4 L17 26" stroke="#56575a" stroke-width="2.6" stroke-linecap="round" stroke-linejoin="round"/></svg>
<svg style="position:absolute;left:1242.0px;top:1553.0px;" width="38" height="36" viewBox="0 0 38 36" fill="none"><path d="M7 12 V30 C7 32 8 33 10 33 H31 C33 33 34 32 34 30 V10 C34 8 33 7 31 7 H26" stroke="#56575a" stroke-width="2.6" stroke-linecap="round"/><path d="M7 4 L3 8 L7 12 M16 4 L20 8 L16 12 M13 2 L10 14" stroke="#56575a" stroke-width="2.4" stroke-linecap="round" stroke-linejoin="round"/></svg>
<div class="t" style="left:661.80px;top:1634.79px;font-size:32.85px;line-height:32.85px;color:#7f8083; -webkit-text-stroke:0.39px #7f8083;transform:scaleX(0.9086);">Jot something down</div>
<div style="position:absolute;left:654.0px;top:1703.7px;width:48.0px;height:48.0px;background:#313338;border-radius:50%;"></div>
<svg style="position:absolute;left:662.0px;top:1711.7px;" width="32" height="32" viewBox="0 0 32 32" fill="none"><path d="M16 3 V29 M3 16 H29" stroke="#d3d3d4" stroke-width="2.6" stroke-linecap="round"/></svg>
<div class="t" style="left:719.40px;top:1709.01px;font-size:37.79px;line-height:37.79px;color:#c5c6c7; -webkit-text-stroke:0.45px #c5c6c7;transform:scaleX(0.8187);">Aa</div>
<div style="position:absolute;left:718.0px;top:1745.5px;width:40.5px;height:2.5px;background:#c5c6c7;"></div>
<svg style="position:absolute;left:784.0px;top:1711.0px;" width="36" height="36" viewBox="0 0 36 36" fill="none"><circle cx="18" cy="18" r="15" stroke="#c5c6c7" stroke-width="2.6"/><circle cx="12.5" cy="14.5" r="2.2" fill="#c5c6c7"/><circle cx="23.5" cy="14.5" r="2.2" fill="#c5c6c7"/><path d="M11 21 C13 25 23 25 25 21" stroke="#c5c6c7" stroke-width="2.6" stroke-linecap="round"/></svg>
<svg style="position:absolute;left:847.0px;top:1710.0px;" width="38" height="38" viewBox="0 0 38 38" fill="none"><path d="M26 19 C26 23 23 26 19 26 C15 26 12 23 12 19 C12 15 15 12 19 12 C23 12 26 15 26 19 Z M26 13 V21.5 C26 24.5 28 26 30 26 C33 26 35 23 35 19 C35 10 28 3 19 3 C10 3 3 10 3 19 C3 28 10 35 19 35 C22 35 25 34 27 33" stroke="#c5c6c7" stroke-width="2.6" stroke-linecap="round"/></svg>
<div style="position:absolute;left:909.8px;top:1709.0px;width:2.2px;height:38.0px;background:#45464a;"></div>
<svg style="position:absolute;left:938.0px;top:1711.0px;" width="38" height="34" viewBox="0 0 38 34" fill="none"><rect x="3" y="5" width="24" height="24" rx="4" stroke="#c5c6c7" stroke-width="2.6"/><path d="M27 13.5 L34.5 8.5 V25.5 L27 20.5" stroke="#c5c6c7" stroke-width="2.6" stroke-linejoin="round"/></svg>
<svg style="position:absolute;left:1006.0px;top:1711.0px;" width="28" height="34" viewBox="0 0 28 34" fill="none"><rect x="8.5" y="2" width="10" height="17.5" rx="5" stroke="#c5c6c7" stroke-width="2.5"/><path d="M3.5 14 C3.5 20 7.5 24.2 13.5 24.2 C19.5 24.2 23.5 20 23.5 14 M13.5 24.2 V30.5 M9 31 H18" stroke="#c5c6c7" stroke-width="2.5" stroke-linecap="round"/></svg>
<div style="position:absolute;left:1063.5px;top:1709.0px;width:2.3px;height:38.0px;background:#45464a;"></div>
<svg style="position:absolute;left:1093.0px;top:1711.0px;" width="34" height="34" viewBox="0 0 34 34" fill="none"><rect x="3.2" y="3.2" width="27.6" height="27.6" rx="4.5" stroke="#c5c6c7" stroke-width="2.5"/><path d="M21 8.5 L13 25.5" stroke="#c5c6c7" stroke-width="2.5" stroke-linecap="round"/></svg>
<svg style="position:absolute;left:1320.0px;top:1712.0px;" width="34" height="32" viewBox="0 0 34 32" fill="none"><path d="M3 3.5 L31 16 L3 28.5 L8 16 Z" fill="#6e6f72"/><path d="M8 16 H18" stroke="#222529" stroke-width="1"/></svg>
<div style="position:absolute;left:1367.2px;top:1709.0px;width:2.3px;height:38.0px;background:#45464a;"></div>
<svg style="position:absolute;left:1384.0px;top:1720.0px;" width="20" height="14" viewBox="0 0 20 14" fill="none"><path d="M3 3.5 L9.5 10 L16 3.5" stroke="#7d7e80" stroke-width="2.4" stroke-linecap="round" stroke-linejoin="round"/></svg>
<div class="t" style="left:1506.80px;top:113.07px;font-size:38.66px;line-height:38.66px;color:#d1d2d3; font-weight:700;transform:scaleX(0.8832);">Profile</div>
<svg style="position:absolute;left:1960.0px;top:114.0px;" width="36" height="36" viewBox="0 0 36 36" fill="none"><path d="M4.5 4.5 L31.5 31.5 M31.5 4.5 L4.5 31.5" stroke="#b3b4b6" stroke-width="2.6" stroke-linecap="round"/></svg>
<div style="position:absolute;left:1506.0px;top:212.0px;width:500.0px;height:500.0px;background:#f4511e;border-radius:15px;"></div>
<div style="position:absolute;left:1622px;top:313px;width:299px;height:286px;border-radius:8px;background:#f5724b;overflow:hidden;"><div style="position:absolute;left:58px;top:38px;width:176px;height:100px;border-radius:70px 70px 10px 10px;background:#f9a688;filter:blur(9px);"></div><div style="position:absolute;left:38px;top:112px;width:230px;height:82px;border-radius:30px;background:#f9a88b;filter:blur(9px);"></div><div style="position:absolute;left:50px;top:170px;width:194px;height:80px;border-radius:10px 10px 50px 50px;background:#f9a688;filter:blur(9px);"></div></div>
<div style="position:absolute;left:1486.0px;top:732.8px;width:236.8px;height:65.7px;background:#4d4e52;border-radius:10px;overflow:hidden;"><div style="position:absolute;left:22px;right:22px;top:20px;bottom:20px;background:#e6e6e6;filter:blur(8px);border-radius:8px"></div></div>
<div class="t" style="left:1955.00px;top:751.30px;font-size:31.54px;line-height:31.54px;color:#1d9bd1; font-weight:700;transform:scaleX(0.8488);">Edit</div>
<svg style="position:absolute;left:1506.0px;top:837.0px;" width="30" height="30" viewBox="0 0 30 30" fill="none"><path d="M15 3.5 V25.5 M4 14.5 H26" stroke="#1d9bd1" stroke-width="2.8" stroke-linecap="round"/></svg>
<div class="t" style="left:1543.70px;top:835.49px;font-size:30.96px;line-height:30.96px;color:#1d9bd1; -webkit-text-stroke:0.37px #1d9bd1;transform:scaleX(0.9604);">Add name pronunciation</div>
<div style="position:absolute;left:1516.8px;top:917.3px;width:18.0px;height:18.0px;background:#3aa87b;border-radius:50%;"></div>
<div class="t" style="left:1562.00px;top:911.52px;font-size:30.81px;line-height:30.81px;color:#d1d2d3; -webkit-text-stroke:0.37px #d1d2d3;transform:scaleX(0.9885);">Active</div>
<svg style="position:absolute;left:1506.0px;top:986.0px;" width="40" height="40" viewBox="0 0 40 40" fill="none"><circle cx="20" cy="20" r="16.5" stroke="#d1d2d3" stroke-width="2.6"/><path d="M20 10.5 V20.5 H28" stroke="#d1d2d3" stroke-width="2.6" stroke-linecap="round" stroke-linejoin="round"/></svg>
<div class="t" style="left:1563.50px;top:991.42px;font-size:30.81px;line-height:30.81px;color:#d1d2d3; -webkit-text-stroke:0.37px #d1d2d3;transform:scaleX(0.9823);">10:31 AM local time</div>
<div style="position:absolute;left:1506.4px;top:1052.4px;width:196.9px;height:70.6px;border:2px solid #545558;border-radius:13px;box-sizing:border-box;"></div>
<div class="t" style="left:1532.40px;top:1071.16px;font-size:30.52px;line-height:30.52px;color:#f8f8f8; font-weight:700;transform:scaleX(0.8931);">Set a sta...</div>
<div style="position:absolute;left:1720.6px;top:1052.4px;width:196.9px;height:70.6px;border:2px solid #545558;border-radius:13px;box-sizing:border-box;"></div>
<div class="t" style="left:1748.50px;top:1071.16px;font-size:30.52px;line-height:30.52px;color:#f8f8f8; font-weight:700;transform:scaleX(0.9200);">View as</div>
<svg style="position:absolute;left:1865.0px;top:1078.0px;" width="22" height="16" viewBox="0 0 22 16" fill="none"><path d="M4 4 L11 11 L18 4" stroke="#f0f0f0" stroke-width="2.4" stroke-linecap="round" stroke-linejoin="round"/></svg>
<div style="position:absolute;left:1932.0px;top:1052.4px;width:74.0px;height:70.6px;background:#333336;border:2px solid #5a5a5d;border-radius:13px;box-sizing:border-box;"></div>
<div style="position:absolute;left:1966.3px;top:1071.3px;width:7.4px;height:7.4px;background:#f8f8f8;border-radius:50%;"></div>
<div style="position:absolute;left:1966.3px;top:1083.7px;width:7.4px;height:7.4px;background:#f8f8f8;border-radius:50%;"></div>
<div style="position:absolute;left:1966.3px;top:1096.0px;width:7.4px;height:7.4px;background:#f8f8f8;border-radius:50%;"></div>
<div style="position:absolute;left:1474.0px;top:1155.0px;width:564.0px;height:2.0px;background:#35373b;"></div>
<div style="position:absolute;left:1474.0px;top:1486.0px;width:564.0px;height:2.0px;background:#35373b;"></div>
<div style="position:absolute;left:1404px;top:1122px;width:602px;height:545px;background:#222529;border:2px solid #3c3e42;border-radius:17px;box-sizing:border-box;box-shadow:0 4px 12px rgba(0,0,0,0.35);"></div>
<div class="t" style="left:1454.70px;top:1159.86px;font-size:30.52px;line-height:30.52px;color:#d1d2d3; -webkit-text-stroke:0.37px #d1d2d3;transform:scaleX(0.9228);">Copy display name: @</div>
<div style="position:absolute;left:1741.0px;top:1152.4px;width:124.6px;height:42.6px;background:#8a8b8d;border-radius:9px;overflow:hidden;"><div style="position:absolute;left:12px;right:12px;top:12px;bottom:12px;background:#b5b6b7;filter:blur(6px);border-radius:8px"></div></div>
<div style="position:absolute;left:1406.0px;top:1219.8px;width:598.0px;height:2.0px;background:#393b3f;"></div>
<div class="t" style="left:1454.70px;top:1249.96px;font-size:30.52px;line-height:30.52px;color:#d1d2d3; -webkit-text-stroke:0.37px #d1d2d3;transform:scaleX(0.9658);">View preferences</div>
<div class="t" style="left:1454.70px;top:1305.67px;font-size:31.11px;line-height:31.11px;color:#d1d2d3; -webkit-text-stroke:0.37px #d1d2d3;transform:scaleX(0.9531);">Account settings</div>
<svg style="position:absolute;left:1926.0px;top:1306.0px;" width="32" height="32" viewBox="0 0 32 32" fill="none"><path d="M16 6 H9 C6.5 6 5 7.5 5 10 V23 C5 25.5 6.5 27 9 27 H22 C24.5 27 26 25.5 26 23 V16" stroke="#d1d2d3" stroke-width="2.5" stroke-linecap="round"/><path d="M14 18 L27 5 M19 4.5 H27.5 V13" stroke="#d1d2d3" stroke-width="2.5" stroke-linecap="round" stroke-linejoin="round"/></svg>
<div style="position:absolute;left:1406.0px;top:1365.4px;width:598.0px;height:2.0px;background:#393b3f;"></div>
<div class="t" style="left:1454.70px;top:1396.05px;font-size:31.25px;line-height:31.25px;color:#d1d2d3; -webkit-text-stroke:0.38px #d1d2d3;transform:scaleX(0.9520);">View your files</div>
<div class="t" style="left:1454.70px;top:1452.16px;font-size:30.52px;line-height:30.52px;color:#d1d2d3; -webkit-text-stroke:0.37px #d1d2d3;transform:scaleX(0.9536);">Set yourself away</div>
<div style="position:absolute;left:1406.0px;top:1511.4px;width:598.0px;height:2.0px;background:#393b3f;"></div>
<div style="position:absolute;left:1419.0px;top:1526.0px;width:574.0px;height:61.5px;background:#39393c;border-radius:15px;"></div>
<div class="t" style="left:1454.70px;top:1540.93px;font-size:31.98px;line-height:31.98px;color:#d1d2d3; -webkit-text-stroke:0.38px #d1d2d3;transform:scaleX(0.9142);">Copy member ID</div>
<div class="t" style="left:1454.70px;top:1597.49px;font-size:30.96px;line-height:30.96px;color:#d1d2d3; -webkit-text-stroke:0.37px #d1d2d3;transform:scaleX(0.9731);">Copy link to profile</div>
<div style="position:absolute;left:150.0px;top:1134.0px;width:436.0px;height:58.0px;border:6px solid #f05a24;border-radius:13px;box-sizing:border-box;"></div>
<div style="position:absolute;left:150.0px;top:1350.3px;width:436.0px;height:71.1px;border:6px solid #f05a24;border-radius:14px;box-sizing:border-box;"></div>
<div style="position:absolute;left:622.0px;top:968.5px;width:231.0px;height:229.0px;border:6px solid #f05a24;border-radius:14px;box-sizing:border-box;"></div>
<div style="position:absolute;left:1926.0px;top:1043.7px;width:87.8px;height:87.5px;border:7px solid #f05a24;border-radius:18px;box-sizing:border-box;"></div>
<div style="position:absolute;left:1412.7px;top:1520.0px;width:586.8px;height:73.6px;border:7px solid #f05a24;border-radius:22px;box-sizing:border-box;"></div>
<div style="position:absolute;left:124.4px;top:1103.6px;width:50.4px;height:50.4px;border-radius:50%;background:#f05a24;"></div>
<div class="t" style="left:139.62px;top:1111.27px;font-size:34.88px;line-height:34.88px;color:#ffffff; font-weight:700;transform:scaleX(1.0000);">1</div>
<div style="position:absolute;left:124.4px;top:1324.6px;width:50.4px;height:50.4px;border-radius:50%;background:#f05a24;"></div>
<div class="t" style="left:139.62px;top:1332.27px;font-size:34.88px;line-height:34.88px;color:#ffffff; font-weight:700;transform:scaleX(1.0000);">2</div>
<div style="position:absolute;left:827.0px;top:944.1px;width:50.4px;height:50.4px;border-radius:50%;background:#f05a24;"></div>
<div class="t" style="left:842.22px;top:951.77px;font-size:34.88px;line-height:34.88px;color:#ffffff; font-weight:700;transform:scaleX(1.0000);">3</div>
<div style="position:absolute;left:1900.3px;top:1019.8px;width:50.4px;height:50.4px;border-radius:50%;background:#f05a24;"></div>
<div class="t" style="left:1915.52px;top:1027.47px;font-size:34.88px;line-height:34.88px;color:#ffffff; font-weight:700;transform:scaleX(1.0000);">4</div>
<div style="position:absolute;left:1391.8px;top:1494.8px;width:50.4px;height:50.4px;border-radius:50%;background:#f05a24;"></div>
<div class="t" style="left:1407.02px;top:1502.47px;font-size:34.88px;line-height:34.88px;color:#ffffff; font-weight:700;transform:scaleX(1.0000);">5</div></body></html>
